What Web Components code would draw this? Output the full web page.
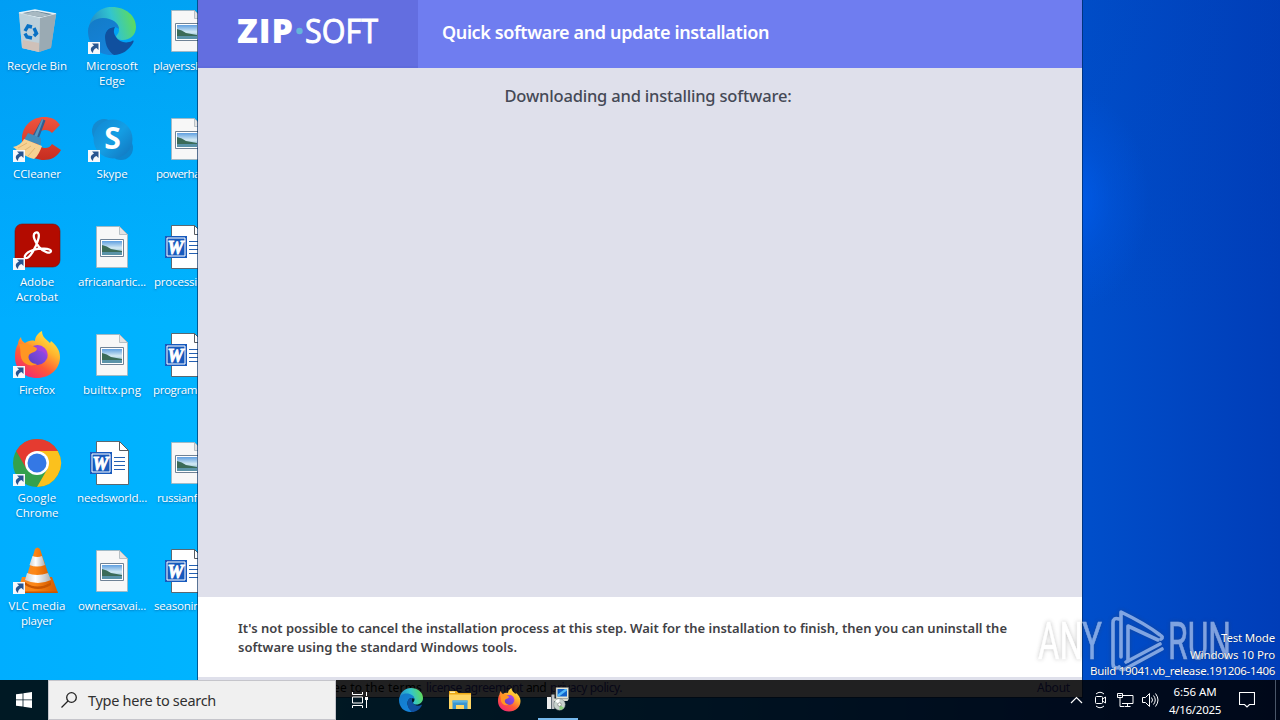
<!DOCTYPE html>
<html lang="en">
<head>
<meta charset="utf-8">
<title>Desktop</title>
<style>
    html, body {
        margin: 0;
        width: 1280px;
        height: 720px;
        overflow: hidden;
        font-family: "Noto Sans", "Open Sans", sans-serif;
    }
</style>
</head>
<body>
<desktop-screen>
    <desktop-icons slot="icons">
        <desktop-item icon="bin"><fit-text width="60">Recycle Bin</fit-text></desktop-item>
        <desktop-item icon="ccleaner" shortcut><fit-text width="48">CCleaner</fit-text></desktop-item>
        <desktop-item icon="acrobat" shortcut><fit-text width="34">Adobe</fit-text><fit-text width="42">Acrobat</fit-text></desktop-item>
        <desktop-item icon="firefox" shortcut><fit-text width="36">Firefox</fit-text></desktop-item>
        <desktop-item icon="chrome" shortcut><fit-text width="39">Google</fit-text><fit-text width="43">Chrome</fit-text></desktop-item>
        <desktop-item icon="vlc" shortcut><fit-text width="57">VLC media</fit-text><fit-text width="32">player</fit-text></desktop-item>
        <desktop-item icon="edge" shortcut><fit-text width="52">Microsoft</fit-text><fit-text width="26">Edge</fit-text></desktop-item>
        <desktop-item icon="skype" shortcut><fit-text width="31">Skype</fit-text></desktop-item>
        <desktop-item icon="image"><fit-text width="68">africanartic...</fit-text></desktop-item>
        <desktop-item icon="image"><fit-text width="58">builttx.png</fit-text></desktop-item>
        <desktop-item icon="word"><fit-text width="70">needsworld...</fit-text></desktop-item>
        <desktop-item icon="image"><fit-text width="68">ownersavai...</fit-text></desktop-item>
        <desktop-item icon="image" cut style="--cut: 3px"><fit-text width="49">playerssh</fit-text></desktop-item>
        <desktop-item icon="image" cut style="--cut: 6px"><fit-text width="44">powerha</fit-text></desktop-item>
        <desktop-item icon="word" cut style="--cut: 4px"><fit-text width="43">processi</fit-text></desktop-item>
        <desktop-item icon="word" cut style="--cut: 3px"><fit-text width="44">program</fit-text></desktop-item>
        <desktop-item icon="image" cut style="--cut: 7px"><fit-text width="40">russianf</fit-text></desktop-item>
        <desktop-item icon="word" cut style="--cut: 4px"><fit-text width="46">seasonin</fit-text></desktop-item>
    </desktop-icons>
    <installer-window slot="window">
        <fit-text slot="title" width="327">Quick software and update installation</fit-text>
        <fit-text slot="status" width="287">Downloading and installing software:</fit-text>
        <fit-text slot="note" width="769">It's not possible to cancel the installation process at this step. Wait for the installation to finish, then you can uninstall the</fit-text>
        <fit-text slot="note" width="279">software using the standard Windows tools.</fit-text>
    </installer-window>
    <run-watermark slot="overlay"></run-watermark>
    <build-info slot="overlay">
        <fit-text width="54">Test Mode</fit-text>
        <fit-text width="85">Windows 10 Pro</fit-text>
        <fit-text width="185">Build 19041.vb_release.191206-1406</fit-text>
    </build-info>
    <task-bar slot="taskbar">
        <fit-text slot="search" width="128">Type here to search</fit-text>
        <fit-text slot="clock" width="43">6:56 AM</fit-text>
        <fit-text slot="clock" width="52">4/16/2025</fit-text>
    </task-bar>
</desktop-screen>

<script>
    const pageShape = `
        <path d="M8.5 3.5h23l8 8v33h-31z" fill="#f7f7f7" stroke="#a9b4ba" stroke-width=".8"/>
        <path d="M31.500 3.500v8h8z" fill="#e3e3e3" stroke="#a9b4ba" stroke-width=".8"/>`;

    const ICONS = {
        bin: `
            <defs><linearGradient id="b1" x1="0" y1="0" x2="1" y2="1"><stop offset="0" stop-color="#9fb9c6"/><stop offset=".6" stop-color="#b9cbd5"/><stop offset="1" stop-color="#8c969c"/></linearGradient></defs>
            <path d="M6 6 22 3l21 4-5 34-12 4-17-4z" fill="url(#b1)"/>
            <path d="M6 6 22 3l21 4-16 4z" fill="#66869a" stroke="#e8f2f7" stroke-width="1.300"/>
            <path d="M10 7l12-3 15 4-10 2z" fill="#a8b9c2"/>
            <path d="m27 11 16-4-5 34-12 4z" fill="#9aaab3"/>
            <path d="M6 6l21 5-1 34-17-4z" fill="#bed0da" opacity=".9"/>
            <path d="M10 33l16 3v9l-17-4z" fill="#d6bcae" opacity=".75"/>
            <g fill="none" stroke="#0871c5" stroke-width="3.400"><path d="m12 24 3-5 4 1"/><path d="m21 21 2.500 5.500-2.500 2.500"/><path d="M19 31l-5-1-2-3.500"/></g>`,
        edge: `
            <defs>
                <linearGradient id="e1" x1="0" y1=".5" x2="1" y2=".3"><stop offset="0" stop-color="#2189c8"/><stop offset=".5" stop-color="#32c5cf"/><stop offset="1" stop-color="#62dd52"/></linearGradient>
                <linearGradient id="e2" x1="0" y1="0" x2=".5" y2="1"><stop offset="0" stop-color="#137bc7"/><stop offset="1" stop-color="#1583da"/></linearGradient>
            </defs>
            <path d="M1 22C2 8 12 0 24 0c14 0 24 9 24 20 0 8-6 13-13 13-4 0-7-1-7-3s3-3 3-7c0-5-6-10-14-10-8 0-14 4-16 9z" fill="url(#e1)"/>
            <path d="M0 24c0-8 7-13 15-13 9 0 16 5 16 11-7-5-14 0-14 8 0 8 5 14 11 17-2 .6-3 1-5 1C10 48 0 38 0 24z" fill="url(#e2)"/>
            <path d="M17 30c0-6 4-10 10-10-2 4-1 7 1 10 3 5 10 7 16 4 2-1 2 0 1 2-4 7-11 12-19 12-5-3-9-10-9-18z" fill="#10509f"/>`,
        ccleaner: `
            <defs><linearGradient id="c1" x1="0" y1="0" x2="0" y2="1"><stop offset="0" stop-color="#f0543e"/><stop offset="1" stop-color="#c62d20"/></linearGradient></defs>
            <path d="M47 10C43 4 38 2 31 2 19 2 9 11 9 24c0 12 10 21 22 21 7 0 13-3 17-10l-9-6c-2 3-4 4-7 4-5 0-8-4-8-9s3-9 8-9c3 0 5 1 7 3z" fill="url(#c1)"/>
            <path d="m29 4 3.500 1.500-8 21-7-2z" fill="#315e91"/><path d="m29 4 1.500.5-7 19-3-1z" fill="#5797bf"/>
            <path d="m15 18 13 5v7l-17-5z" fill="#3e8cbc"/>
            <path d="M11 24l18 7c-2 5-4 10-8 13C14 43 5 36 0 32c5-1 9-4 11-8z" fill="#f6d293"/>
            <path d="m5 33 9-5m-5 9 9-6m-3 10 7-8" stroke="#e3b672" stroke-width="1"/>`,
        skype: `
            <defs><linearGradient id="s1" x1="0" y1="0" x2="1" y2="1"><stop offset="0" stop-color="#1187d2"/><stop offset=".5" stop-color="#149ee4"/><stop offset="1" stop-color="#1272bb"/></linearGradient></defs>
            <circle cx="16" cy="16" r="12" fill="#148ad0"/><circle cx="33" cy="33" r="12" fill="#0e86ce"/><circle cx="25" cy="24" r="19.500" fill="url(#s1)"/>
            <text x="24.500" y="34" text-anchor="middle" font-family="Open Sans, sans-serif" font-weight="700" font-size="30" fill="#fff">S</text>`,
        acrobat: `
            <rect x="2" y="1" width="45" height="43" rx="7" fill="#b30b00" stroke="#7b100a" stroke-width=".6"/>
            <path d="M22 10c3-2 5 1 3 7-2 8-8 17-11 18-4 1-3-5 6-8 7-2 17-2 18 1 0 3-7 2-12-4-4-5-7-12-4-14z" fill="none" stroke="#fff" stroke-width="2.300"/>`,
        firefox: `
            <defs>
                <linearGradient id="f1" x1=".85" y1="0" x2=".2" y2="1"><stop offset="0" stop-color="#fff34d"/><stop offset=".35" stop-color="#ffb52d"/><stop offset=".65" stop-color="#ff5a36"/><stop offset="1" stop-color="#f0237a"/></linearGradient>
                <linearGradient id="f2" x1="1" y1="0" x2="0" y2="1"><stop offset="0" stop-color="#a34af3"/><stop offset="1" stop-color="#5641be"/></linearGradient>
            </defs>
            <path d="M5 13c0-2 1-5 3-7 0 3 2 5 4 6 3-2 6-3 10-2 0-4 3-8 7-10 0 6 4 8 8 12l1-2c5 4 9 9 9 16 0 12-10 21-23 21S2 38 2 26c0-6 1-10 3-13z" fill="url(#f1)"/>
            <circle cx="24.500" cy="24" r="10" fill="url(#f2)"/>
            <path d="M6 13c6-1 12 1 18 4 1 4-6 4-8 7-2 4 2 9 8 9-7 4-15-1-16-7-1-4 0-8-2-13z" fill="#ff9623"/>
            <path d="M22 16c7-3 13 2 13 9 0 1 0 2-.5 3-1-5-4-8-8-8-2 0-3-2-4.500-4z" fill="#c63fd0" opacity=".45"/>`,
        chrome: `
            <circle cx="24" cy="24" r="24" fill="#34a14c"/>
            <path d="M24 24 13.600 30 3.200 12A24 24 0 0 1 44.800 12H24z" fill="#e53b30"/>
            <path d="M24 12h20.800A24 24 0 0 1 24 48l10.400-18z" fill="#fbc11d"/>
            <circle cx="24" cy="24" r="12" fill="#fff"/><circle cx="24" cy="24" r="9.500" fill="#3478e5"/>`,
        vlc: `
            <defs><linearGradient id="v1"><stop offset="0" stop-color="#f58a28"/><stop offset=".4" stop-color="#fd8614"/><stop offset="1" stop-color="#d45b00"/></linearGradient><linearGradient id="v2"><stop offset="0" stop-color="#cfcfcf"/><stop offset=".4" stop-color="#fff"/><stop offset="1" stop-color="#adb0b3"/></linearGradient></defs>
            <path d="M9 30h30l6 16H4z" fill="url(#v1)"/>
            <path d="M12 35q12 9 26 0v3q-13 8-26 0z" fill="#c95600"/>
            <path d="M22 2q2.500-3 5 0l11 33q-14 8-26 0z" fill="url(#v1)"/>
            <path d="M19.500 9q5 2 9.500 0l3 9q-8 3-15.500 0z" fill="url(#v2)"/>
            <path d="M14 26q10 4 21 0l3 7q-13 6-26 0z" fill="url(#v2)"/>
            <path d="M4 44.500h40.500V46H4z" fill="#c95600"/>`,
        image: `
            <defs><linearGradient id="i1" x1="0" y1="0" x2="0" y2="1"><stop offset="0" stop-color="#5f9fe0"/><stop offset=".5" stop-color="#d4eaf4"/><stop offset="1" stop-color="#5b9db5"/></linearGradient></defs>
            ${pageShape}
            <path d="M12.500 16.500h23v17h-23z" fill="#fff" stroke="#6f8296"/>
            <path d="M14 18h20v14H14z" fill="url(#i1)"/>
            <path d="M14 22q5 1 9 4l11 2v1H14z" fill="#3b6b58"/><path d="M14 29h20v3H14z" fill="#5a93a8"/>`,
        word: `
            <path d="M8.500 2.500h23l9 9v34h-32z" fill="#fff" stroke="#565b61" stroke-width=".9"/>
            <path d="M31.500 2.500v9h9z" fill="#fff" stroke="#565b61"/>
            <path d="M26 18.500h11m-11 4h11m-11 4h11m-11 4h11" stroke="#2460b2" stroke-width="1.200"/>
            <path d="M2 13h22v22H2z" fill="#185abd"/><path d="M4 15h18v18H4z" fill="none" stroke="#fff"/>
            <text x="12.500" y="30.500" text-anchor="middle" font-family="Liberation Serif, serif" font-weight="700" font-style="italic" font-size="18" fill="#fff" stroke="#fff" stroke-width=".9">W</text>`,
        explorer: `
            <path d="M2 6h15l4 4h25v32H2z" fill="#eda916"/><path d="M4 7h10v3H4z" fill="#fff0a8"/>
            <path d="M2 13h44v29H2z" fill="#ffd563"/>
            <path d="M9 25h30v17h-7v-8H16v8H9z" fill="#3b95cf"/><path d="M9 25h30v4H9z" fill="#5bb3e4"/>`,
        setup: `
            <path d="M2 20h8v24H2z" fill="#ececec"/><path d="M11 15h6v29h-6z" fill="#bfc1c5"/>
            <path d="M20 1h25v22H20z" fill="#e5e6d7" stroke="#777"/><path d="M23 4h19v15H23z" fill="#1264cb"/><path d="m23 15 15-11h4v3L26 19h-3z" fill="#53b9fa"/>
            <path d="M14 23h32l-3 5H16z" fill="#d8d9cf"/>
            <circle cx="27" cy="35" r="11.500" fill="#c8d2ce" stroke="#6e7b78"/><path d="m27 35-9-7a12 12 0 0 1 9-4z" fill="#fff"/><path d="m27 35 9 7a12 12 0 0 1-9 4z" fill="#8bd17d"/>
            <circle cx="27" cy="35" r="3.500" fill="#fff" stroke="#555"/>`
    };

    // Single line of text, tracked so that it fills the given width
    class FitText extends HTMLElement {
        connectedCallback() {
            this.attachShadow({ mode: 'open' }).innerHTML = `
                <style>
                    :host { display: block; width: max-content; white-space: nowrap; }
                    span { display: inline-block; }
                </style>
                <span><slot></slot></span>`;
            // wait until every element around it is defined
            requestAnimationFrame(() => this.fit());
        }

        fit() {
            const target = Number(this.getAttribute('width'));
            const span = this.shadowRoot.querySelector('span');
            const count = this.textContent.length;
            const gap = (target - span.getBoundingClientRect().width) / count;
            span.style.letterSpacing = gap + 'px';
        }
    }

    class AppIcon extends HTMLElement {
        connectedCallback() {
            this.attachShadow({ mode: 'open' }).innerHTML = `
                <style>
                    :host { display: block; width: 48px; height: 48px; }
                    svg { display: block; width: 100%; height: 100%; overflow: visible; }
                </style>
                <svg viewBox="0 0 48 48">${ICONS[this.getAttribute('name')]}</svg>`;
        }
    }

    class DesktopItem extends HTMLElement {
        connectedCallback() {
            const arrow = this.hasAttribute('shortcut') ? `
                <svg class="arrow" viewBox="0 0 12 12">
                    <path d="M0 0h12v12H0z" fill="#f6f8fc"/>
                    <path d="M4 1.500h6.500V8L8.500 6C6 7 5 8.500 5 11 1.500 8 2.500 5 6 3.500z" fill="#295590"/>
                </svg>` : '';
            this.attachShadow({ mode: 'open' }).innerHTML = `
                <style>
                    :host { display: block; width: 74px; height: 101px; padding-top: 7px; color: #fff; font-size: 11.5px; line-height: 15px; }
                    .picture { position: relative; width: 48px; margin: 0 auto 3px; }
                    .arrow { position: absolute; left: 0; bottom: 1px; width: 12px; height: 12px; }
                    .label { display: flex; flex-direction: column; align-items: center; text-shadow: 0 1px 2px rgba(0, 55, 115, .55); }
                    :host([cut]) .label { align-items: flex-start; padding-left: var(--cut); }
                </style>
                <div class="picture"><app-icon name="${this.getAttribute('icon')}"></app-icon>${arrow}</div>
                <div class="label"><slot></slot></div>`;
        }
    }

    class DesktopIcons extends HTMLElement {
        connectedCallback() {
            this.attachShadow({ mode: 'open' }).innerHTML = `
                <style>
                    :host {
                        display: grid;
                        grid-template-rows: repeat(6, 108px);
                        grid-auto-columns: 75px;
                        grid-auto-flow: column;
                        width: 198px;
                        height: 680px;
                        overflow: hidden;
                        font-family: "Open Sans", "Noto Sans", sans-serif;
                    }
                </style>
                <slot></slot>`;
        }
    }

    class InstallerWindow extends HTMLElement {
        connectedCallback() {
            this.attachShadow({ mode: 'open' }).innerHTML = `
                <style>
                    :host {
                        display: flex;
                        flex-direction: column;
                        width: 884px;
                        height: 697px;
                        background: #dfe0eb;
                        box-shadow: 0 0 0 1px rgba(0, 40, 90, .65);
                    }
                    header { display: flex; height: 68px; background: #6f7df0; }
                    .brand { width: 220px; height: 66px; background: #636ee0; border-bottom: 2px solid #5f6bdc; }
                    .brand svg { display: block; }
                    .title { margin: 19px 0 0 24px; color: #fff; font-size: 18px; line-height: 26px; font-weight: 600; }
                    main { flex: 1; display: flex; justify-content: center; padding: 15px 0 0 16px; color: #454956; font-size: 16.5px; line-height: 26px; font-weight: 500; }
                    .note { height: 58px; padding: 22px 40px 0; background: #fff; color: #414145; font-size: 13px; line-height: 19px; font-weight: 600; }
                    footer { display: flex; height: 16px; padding: 4px 12px 0 108px; color: #000; font-size: 12px; line-height: 14px; }
                    footer a { color: #3434a0; text-decoration: underline; }
                    .about { margin-left: auto; }
                    .spaced { margin: 0 3px 0 4px; }
                </style>
                <header>
                    <div class="brand">
                        <svg width="220" height="66">
                            <g fill="#fff" font-family="Open Sans, sans-serif">
                                <text x="39" y="43" font-size="34" font-weight="800" textLength="56" lengthAdjust="spacing">ZIP</text>
                                <text x="107" y="43" font-size="32" textLength="73" lengthAdjust="spacingAndGlyphs" stroke="#fff" stroke-width=".9">SOFT</text>
                            </g>
                            <circle cx="101.500" cy="31" r="3.200" fill="#65b6da"/>
                        </svg>
                    </div>
                    <div class="title"><slot name="title"></slot></div>
                </header>
                <main><slot name="status"></slot></main>
                <div class="note"><slot name="note"></slot></div>
                <footer>
                    <fit-text width="116">I agree to the terms</fit-text>
                    <a class="spaced"><fit-text width="97">license agreement</fit-text></a>
                    <fit-text width="20">and</fit-text>
                    <a class="spaced"><fit-text width="72">privacy policy.</fit-text></a>
                    <a class="about"><fit-text width="33">About</fit-text></a>
                </footer>`;
        }
    }

    class BuildInfo extends HTMLElement {
        connectedCallback() {
            this.attachShadow({ mode: 'open' }).innerHTML = `
                <style>
                    :host {
                        position: absolute;
                        right: 5px;
                        top: 630px;
                        display: flex;
                        flex-direction: column;
                        align-items: flex-end;
                        color: #fff;
                        font-size: 11.5px;
                        line-height: 16.5px;
                        text-shadow: 0 0 1px #001a50;
                    }
                </style>
                <slot></slot>`;
        }
    }

    class RunWatermark extends HTMLElement {
        connectedCallback() {
            this.attachShadow({ mode: 'open' }).innerHTML = `
                <style>
                    :host { position: absolute; left: 1030px; top: 604px; opacity: .5; }
                    svg { display: block; filter: drop-shadow(0 0 2px rgba(60, 60, 60, .6)); }
                </style>
                <svg width="206" height="74">
                    <g fill="#fff" stroke="#fff" stroke-width=".6" font-family="Roboto, sans-serif" font-size="52">
                        <text x="8" y="55" textLength="64" lengthAdjust="spacingAndGlyphs">ANY</text>
                        <text x="138" y="55" textLength="63" lengthAdjust="spacingAndGlyphs">RUN</text>
                    </g>
                    <g fill="none" stroke="#fff" stroke-width="3.600" stroke-linejoin="round" stroke-linecap="round">
                        <path d="M89 15q-6-2-6 4v41q0 4 4 4"/>
                        <path d="M91 53V8q25 12 39 23 4 2 1 4"/>
                        <path d="M98 57V22l30 14"/>
                        <path d="M96 58l34-18M89 63q2 4 6 2l37-20"/>
                    </g>
                </svg>`;
        }
    }

    class TaskBar extends HTMLElement {
        connectedCallback() {
            this.attachShadow({ mode: 'open' }).innerHTML = `
                <style>
                    :host { display: flex; height: 40px; background: rgba(0, 0, 0, .86); color: #fff; }
                    svg { display: block; fill: none; stroke: #fff; }
                    .start { display: grid; place-items: center; width: 48px; }
                    .search {
                        display: flex;
                        align-items: center;
                        gap: 11px;
                        box-sizing: border-box;
                        width: 288px;
                        padding-left: 12px;
                        background: #f0f0f0;
                        border: 1px solid #c5c5cb;
                        color: #303030;
                        font-size: 14.5px;
                    }
                    .apps { display: flex; }
                    .app { display: grid; place-items: center; box-sizing: border-box; width: 49px; height: 40px; }
                    .app app-icon { width: 24px; height: 24px; }
                    .view { width: 49px; margin-right: 1px; }
                    .active { width: 40px; margin-left: 5px; border-bottom: 2px solid #76b9ed; }
                    .tray { display: flex; align-items: center; gap: 8px; margin-left: auto; }
                    .clock { display: flex; flex-direction: column; align-items: center; width: 56px; padding-top: 1px; font-size: 11.5px; line-height: 18px; }
                    .notify { margin: 0 20px 0 8px; }
                    .edge { width: 4px; height: 40px; border-left: 1px solid #4a5669; }
                </style>
                <div class="start">
                    <svg width="16" height="16" viewBox="0 0 16 16"><path d="M0 2.300 6.600 1.400v6.100H0zM7.400 1.300 16 0v7.500H7.400zM0 8.300h6.600v6.300L0 13.700zM7.400 8.300H16V16l-8.600-1.200z" fill="#fff" stroke="none"/></svg>
                </div>
                <div class="search">
                    <svg width="16" height="16" viewBox="0 0 16 16" style="stroke:#222;stroke-width:1.300"><circle cx="10.500" cy="5.500" r="4.800"/><path d="m7 9-6.500 6.500"/></svg>
                    <slot name="search"></slot>
                </div>
                <div class="apps">
                    <div class="app view"><svg width="17" height="16" viewBox="0 0 17 16"><path d="M.5 0v2.500h10V0M.5 16v-2.500h10V16M.5 5h10v6H.5zM14.500 0v4m0 4v8"/><path d="M13 5h3v3h-3z" fill="#fff" stroke="none"/></svg></div>
                    <div class="app"><app-icon name="edge"></app-icon></div>
                    <div class="app"><app-icon name="explorer"></app-icon></div>
                    <div class="app"><app-icon name="firefox"></app-icon></div>
                    <div class="app active"><app-icon name="setup"></app-icon></div>
                </div>
                <div class="tray">
                    <svg width="17" height="16" viewBox="0 0 17 16" style="stroke-width:1.200"><path d="m3 11 5.500-5.500L14 11"/></svg>
                    <svg width="16" height="18" viewBox="0 0 16 18"><rect x="2.500" y="5.500" width="7" height="7" rx="1"/><path d="m9.500 8 3-2v6l-3-2M3 3q4-3.500 8 0M3 15q4 3.500 8 0"/></svg>
                    <svg width="17" height="16" viewBox="0 0 17 16"><path d="M5 3.500h11v8H5M10.500 11.500v3m-3 0h6M.5 1.500h5v4h-5zm2.500 4v9m0 0h4M1.500 3.500h3"/></svg>
                    <svg width="17" height="16" viewBox="0 0 17 16"><path d="M.5 5.500h3l4-4v13l-4-4h-3zM9.500 5.500q2 2.500 0 5m2-7q3.500 4.500 0 9m2-11q5 6.500 0 13"/></svg>
                    <div class="clock"><slot name="clock"></slot></div>
                    <svg class="notify" width="16" height="16" viewBox="0 0 16 16" style="stroke-width:1.100"><path d="M.5.500h15v12h-5L8 15l-2.500-2.500h-5z"/></svg>
                </div>
                <div class="edge"></div>`;
        }
    }

    class DesktopScreen extends HTMLElement {
        connectedCallback() {
            this.attachShadow({ mode: 'open' }).innerHTML = `
                <style>
                    :host {
                        display: block;
                        position: relative;
                        width: 1280px;
                        height: 720px;
                        overflow: hidden;
                        background:
                            radial-gradient(ellipse 75px 110px at 1074px 200px, rgba(0, 100, 255, .55), rgba(0, 100, 255, .2) 50%, transparent),
                            linear-gradient(to bottom, rgba(0, 65, 180, .15), transparent 45%),
                            linear-gradient(to right, #00aeff 0, #00b4ff 200px, #0085e8 700px, #004fcb 1080px, #003db8 1280px);
                    }
                    .window { position: absolute; left: 198px; top: 0; }
                    .bar { position: absolute; left: 0; right: 0; bottom: 0; }
                </style>
                <slot name="icons"></slot>
                <div class="window"><slot name="window"></slot></div>
                <slot name="overlay"></slot>
                <div class="bar"><slot name="taskbar"></slot></div>`;
        }
    }

    customElements.define('fit-text', FitText);
    customElements.define('app-icon', AppIcon);
    customElements.define('desktop-item', DesktopItem);
    customElements.define('desktop-icons', DesktopIcons);
    customElements.define('installer-window', InstallerWindow);
    customElements.define('build-info', BuildInfo);
    customElements.define('run-watermark', RunWatermark);
    customElements.define('task-bar', TaskBar);
    customElements.define('desktop-screen', DesktopScreen);
</script>
</body>
</html>
